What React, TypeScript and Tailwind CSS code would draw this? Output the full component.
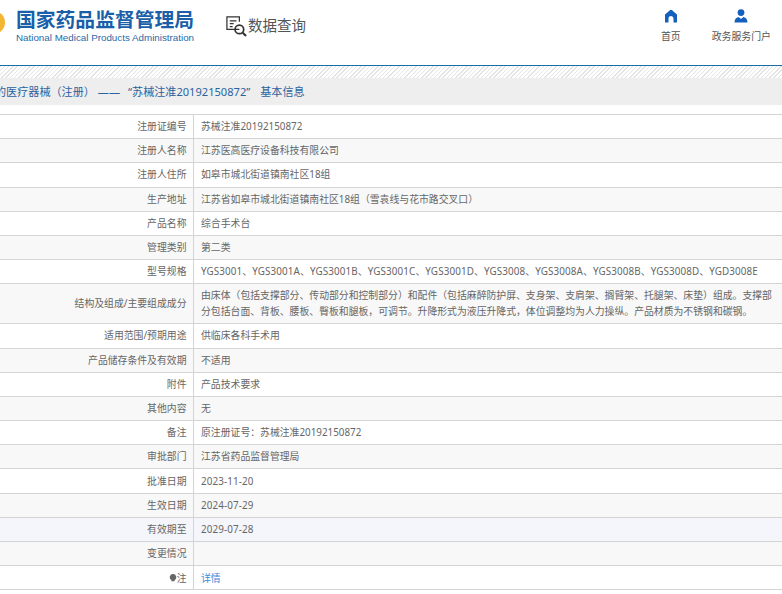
const rows: { label: string; value: string }[] = [
  { label: '注册证编号', value: '苏械注准20192150872' },
  { label: '注册人名称', value: '江苏医高医疗设备科技有限公司' },
  { label: '注册人住所', value: '如皋市城北街道镇南社区18组' },
  { label: '生产地址', value: '江苏省如皋市城北街道镇南社区18组（雪袁线与花市路交叉口）' },
  { label: '产品名称', value: '综合手术台' },
  { label: '管理类别', value: '第二类' },
  { label: '型号规格', value: 'YGS3001、YGS3001A、YGS3001B、YGS3001C、YGS3001D、YGS3008、YGS3008A、YGS3008B、YGS3008D、YGD3008E' },
  { label: '结构及组成/主要组成成分', value: '由床体（包括支撑部分、传动部分和控制部分）和配件（包括麻醉防护屏、支身架、支肩架、搁臂架、托腿架、床垫）组成。支撑部分包括台面、背板、腰板、臀板和腿板，可调节。升降形式为液压升降式，体位调整均为人力操纵。产品材质为不锈钢和碳钢。' },
  { label: '适用范围/预期用途', value: '供临床各科手术用' },
  { label: '产品储存条件及有效期', value: '不适用' },
  { label: '附件', value: '产品技术要求' },
  { label: '其他内容', value: '无' },
  { label: '备注', value: '原注册证号：苏械注准20192150872' },
  { label: '审批部门', value: '江苏省药品监督管理局' },
  { label: '批准日期', value: '2023-11-20' },
  { label: '生效日期', value: '2024-07-29' },
  { label: '有效期至', value: '2029-07-28' },
  { label: '变更情况', value: '' },
]

// row 16 sits under the mouse in the reference, so it has the hover tint
function rowBg(i: number) {
  if (i === 16) return 'bg-[#f5f6fb]'
  return i % 2 === 1 ? 'bg-[#f8f8f8]' : 'bg-white'
}

export default function App() {
  return (
    <div className="w-[782px] h-[594px] overflow-hidden bg-white font-['Noto_Sans','Noto_Sans_CJK_SC',sans-serif] text-[#666]">
      <header className="h-[66px] border-b border-[#1b6ea5] flex items-start">
        <div className="relative w-[200px] shrink-0 pl-[16px] pt-[7px]">
          <div className="absolute left-[-18px] top-[11px] w-[23px] h-[23px] rounded-full bg-[#f2b632]" />
          <div className="text-[19.8px] leading-[26px] font-bold text-[#1a5fa8] whitespace-nowrap">国家药品监督管理局</div>
          <div className="text-[9.8px] leading-[12px] mt-[-1px] text-[#2a6aa8] whitespace-nowrap font-['Liberation_Sans',sans-serif]">National Medical Products Administration</div>
        </div>
        <div className="flex items-start ml-[25px] mt-[15px]">
          <svg viewBox="0 0 24 25" className="w-[23px] h-[24px]" fill="none" stroke="#333" strokeWidth="1.3">
            <path d="M15 15H2V2h13v5" />
            <path d="M5 6h7M5 9h4M5 12h3" />
            <circle cx="15" cy="15" r="4.5" strokeWidth="1.8" />
            <path d="M18.5 18.5 22 22" strokeWidth="2.2" />
          </svg>
          <span className="text-[14.5px] leading-[20px] text-[#555]">数据查询</span>
        </div>
        <nav className="ml-auto flex text-[9.9px] leading-[14px] text-[#555] mt-[9px] mr-[11px]">
          <div className="flex flex-col items-center mr-[31px]">
            <svg viewBox="0 0 14 14" className="w-[14px] h-[14px]" fill="#1560bd">
              <path d="M7 .8C8 .8 8.500 1.800 9.500 2.500L13 5.500v8H9.500V9.500a2.500 2.500 0 0 0-5 0v4H1v-8L4.500 2.500C5.500 1.800 6 .8 7 .8z" />
            </svg>
            <span className="mt-[6px]">首页</span>
          </div>
          <div className="flex flex-col items-center">
            <svg viewBox="0 0 14 14" className="w-[14px] h-[14px]" fill="#1560bd">
              <circle cx="7" cy="3.6" r="3.4" />
              <path d="M0.5 13.500c0-3 1.500-5 4-5.500L7 10l2.500-2c2.500.5 4 2.500 4 5.500z" />
            </svg>
            <span className="mt-[6px]">政务服务门户</span>
          </div>
        </nav>
      </header>

      <div className="h-[12px] bg-[repeating-linear-gradient(135deg,#e4e4e4_0,#e4e4e4_1px,#fff_1px,#fff_3px)]" />
      <div className="h-[27px] bg-[#eeeeee] text-[11.1px] leading-[27px] text-[#2b62a0] whitespace-nowrap flex pl-[6px]">
        <span className="-ml-[11px]">的医疗器械（注册）</span>
        <span className="ml-[3px]">——</span>
        <span className="ml-[8px]">“苏械注准20192150872”</span>
        <span className="ml-[10px]">基本信息</span>
      </div>

      <table className="mt-[9px] w-full border-collapse text-[9.85px] leading-[16px] border-t border-[#d4d4d4]">
        <colgroup>
          <col className="w-[193px]" />
          <col />
        </colgroup>
        <tbody>
          {rows.map((row, i) => (
            <tr key={row.label} className={`border-b border-[#d4d4d4] ${rowBg(i)}`}>
              <td className={`${row.label.startsWith('结构') ? 'h-[40px]' : 'h-[24.2px]'} p-0 pr-[6px] pb-[1px] text-right border-r border-[#d4d4d4] whitespace-nowrap`}>{row.label}</td>
              <td className={`p-0 pl-[7.5px] pr-[10px] pb-[1px] ${/^[A-Z0-9]/.test(row.value) ? 'tracking-[0.12px]' : ''}`}>{row.value}</td>
            </tr>
          ))}
          <tr className="border-b border-[#d4d4d4]">
            <td className="h-[24.2px] p-0 pr-[6px] text-right border-r border-[#d4d4d4]">
              <span className="inline-flex items-center">
                <svg viewBox="0 0 10 10" className="w-[8px] h-[8px]" fill="#666">
                  <path d="M5 0a4 4 0 0 1 2 7.500V9H3V7.500A4 4 0 0 1 5 0z" />
                </svg>
                注
              </span>
            </td>
            <td className="p-0 pl-[7.5px] text-[#3b8bdc]">详情</td>
          </tr>
        </tbody>
      </table>
    </div>
  )
}
